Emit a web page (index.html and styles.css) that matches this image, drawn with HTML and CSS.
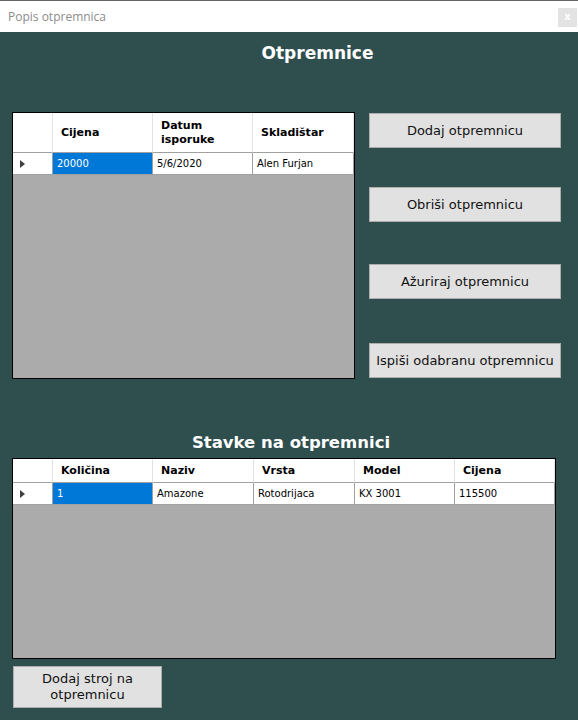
FILE: index.html
```html
<!DOCTYPE html>
<html lang="hr">
<head>
<meta charset="utf-8">
<title>Popis otpremnica</title>
<link rel="stylesheet" href="styles.css">
</head>
<body>
<div class="titlebar">
  <span class="wintitle">Popis otpremnica</span>
  <span class="close">x</span>
</div>
<main class="content">
  <h1 class="heading heading-main">Otpremnice</h1>
  <section class="top">
    <div class="grid grid-top">
      <div class="row head">
        <div class="cell rh"></div>
        <div class="cell">Cijena</div>
        <div class="cell two">Datum<br>isporuke</div>
        <div class="cell">Skladištar</div>
      </div>
      <div class="row data">
        <div class="cell rh"><span class="arrow"></span></div>
        <div class="cell sel">20000</div>
        <div class="cell">5/6/2020</div>
        <div class="cell">Alen Furjan</div>
      </div>
    </div>
    <div class="actions">
      <button class="btn">Dodaj otpremnicu</button>
      <button class="btn">Obriši otpremnicu</button>
      <button class="btn">Ažuriraj otpremnicu</button>
      <button class="btn">Ispiši odabranu otpremnicu</button>
    </div>
  </section>
  <h2 class="heading heading-sub">Stavke na otpremnici</h2>
  <div class="grid grid-bottom">
    <div class="row head">
      <div class="cell rh"></div>
      <div class="cell">Količina</div>
      <div class="cell">Naziv</div>
      <div class="cell">Vrsta</div>
      <div class="cell">Model</div>
      <div class="cell">Cijena</div>
    </div>
    <div class="row data">
      <div class="cell rh"><span class="arrow"></span></div>
      <div class="cell sel">1</div>
      <div class="cell">Amazone</div>
      <div class="cell">Rotodrijaca</div>
      <div class="cell">KX 3001</div>
      <div class="cell">115500</div>
    </div>
  </div>
  <button class="btn btn-add">Dodaj stroj na otpremnicu</button>
</main>
</body>
</html>
```

FILE: styles.css
```css
* { box-sizing: border-box; }
html, body { margin: 0; padding: 0; }
body {
  background: #2f4f4f;
  width: 578px;
  height: 720px;
  overflow: hidden;
  font-family: "DejaVu Sans", sans-serif;
}

.titlebar {
  height: 32px;
  border-top: 1px solid #646464;
  background: #fff;
  display: flex;
  justify-content: space-between;
  align-items: flex-start;
  padding-left: 8px;
}
.wintitle {
  font-family: "Open Sans", sans-serif;
  font-size: 12px;
  line-height: 16px;
  color: #8c8c8c;
  margin-top: 8px;
}
.close {
  width: 19px;
  height: 19px;
  margin-top: 7px;
  margin-right: 1px;
  background: #e3e3e3;
  color: #fff;
  font-size: 10px;
  font-weight: bold;
  line-height: 18px;
  text-align: center;
}

.heading {
  margin: 0;
  color: #fff;
  font-size: 17px;
  font-weight: bold;
  line-height: 20px;
  text-align: center;
}
.heading-main { margin-top: 11px; padding-left: 57px; }
.heading-sub { margin-top: 54px; padding-left: 4px; font-size: 16.5px; }

.top {
  display: flex;
  gap: 14px;
  margin: 49px 0 0 12px;
}

.grid {
  border: 1px solid #000;
  background: #ababab;
}
.grid-top { width: 343px; height: 267px; }
.grid-bottom { width: 544px; height: 201px; margin: 5px 0 0 12px; }

.row { display: grid; }
.grid-top .row { grid-template-columns: 40px 100px 100px 1fr; }
.grid-bottom .row { grid-template-columns: 40px 100px 101px 101px 100px 100px; }

.cell {
  background: #fff;
  color: #000;
  display: flex;
  align-items: center;
  white-space: nowrap;
  overflow: hidden;
}
.head .cell {
  font-size: 11px;
  font-weight: bold;
  line-height: 14px;
  padding-left: 8px;
  border-right: 1px solid #e3e3e3;
  border-bottom: 1px solid #a0a0a0;
}
.grid-top .head { height: 40px; }
.grid-bottom .head { height: 24px; }
.head .cell.two { padding-top: 1px; }

.data { height: 22px; }
.data .cell {
  font-size: 10px;
  padding-left: 4px;
  border-right: 1px solid #a0a0a0;
  border-bottom: 1px solid #a0a0a0;
}
.data .cell.rh { padding-left: 7px; }
.data .cell.sel { background: #0078d7; color: #fff; }

.arrow {
  width: 0;
  height: 0;
  border-left: 5px solid #404040;
  border-top: 4px solid transparent;
  border-bottom: 4px solid transparent;
}

.actions {
  display: flex;
  flex-direction: column;
  width: 192px;
}
.btn {
  display: block;
  height: 35px;
  padding: 0;
  background: #e1e1e1;
  border: 1px solid #adadad;
  color: #111;
  font-family: "DejaVu Sans", sans-serif;
  font-size: 13px;
  text-align: center;
}
.actions .btn:nth-child(1) { margin-top: 1px; }
.actions .btn:nth-child(2) { margin-top: 39px; }
.actions .btn:nth-child(3) { margin-top: 42px; }
.actions .btn:nth-child(4) { margin-top: 44px; }

.btn-add {
  width: 149px;
  height: 42px;
  margin: 7px 0 0 13px;
  line-height: 16px;
  padding: 0 6px;
  white-space: normal;
}
```
